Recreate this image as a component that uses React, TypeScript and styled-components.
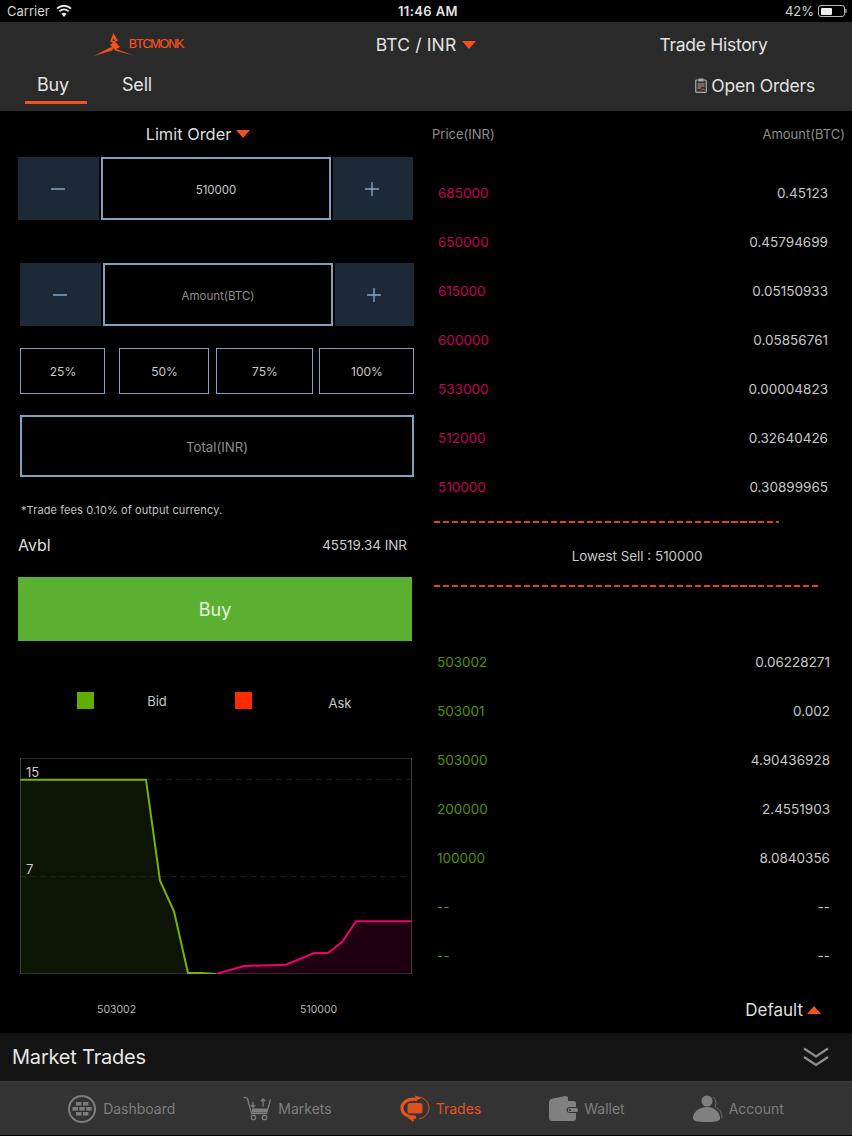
import { FC } from "react";
import styled, { createGlobalStyle } from "styled-components";
import { Minus, Plus } from "lucide-react";

const ORANGE = "#f4511e";
const BORDER = "#7fa2bf";

const GlobalStyle = createGlobalStyle`
  html, body {
    margin: 0;
    padding: 0;
    background: #000;
  }
  * {
    box-sizing: border-box;
  }
  body {
    font-family: Inter, "Noto Sans", "Liberation Sans", sans-serif;
    color: #e0e0e0;
  }
`;

const Page = styled.div`
  width: 852px;
  height: 1136px;
  display: flex;
  flex-direction: column;
  overflow: hidden;
  background: #000;
`;

/* status bar */
const StatusBar = styled.div`
  height: 22px;
  display: grid;
  grid-template-columns: 1fr auto 1fr;
  align-items: center;
  padding: 0 7px;
  font-size: 13px;
  color: #d4d4d4;
`;

const StatusSide = styled.div<{ $right?: boolean }>`
  display: flex;
  align-items: center;
  gap: ${({ $right }) => ($right ? "4px" : "6px")};
  justify-content: ${({ $right }) => ($right ? "flex-end" : "flex-start")};
`;

const Clock = styled.div`
  font-weight: 600;
  color: #e4e4e4;
  letter-spacing: 0.4px;
  padding-left: 4px;
`;

const Battery = styled.div`
  width: 27px;
  height: 12px;
  border: 1px solid #b8b8b8;
  border-radius: 3px;
  padding: 1.5px;
  position: relative;
  &::after {
    content: "";
    position: absolute;
    right: -3px;
    top: 3px;
    width: 2px;
    height: 4px;
    background: #777;
    border-radius: 0 1px 1px 0;
  }
`;

const BatteryFill = styled.div`
  width: 50%;
  height: 100%;
  background: #eee;
  border-radius: 1px;
`;

/* header */
const Header = styled.header`
  height: 89px;
  background: #2a2a2a;
  display: flex;
  flex-direction: column;
`;

const HeaderTop = styled.div`
  height: 45px;
  display: grid;
  grid-template-columns: 277px 298px 277px;
  align-items: center;
  justify-items: center;
`;

const HeaderTitle = styled.div<{ $wide?: boolean }>`
  display: flex;
  align-items: center;
  gap: 6px;
  font-size: 17.5px;
  color: #e2e2e2;
  letter-spacing: ${({ $wide }) => ($wide ? "0.15px" : "-0.3px")};
`;

const Logo = styled.div`
  display: flex;
  align-items: center;
`;

const LogoText = styled.span`
  font-family: "Liberation Sans", sans-serif;
  font-size: 12.5px;
  color: ${ORANGE};
  letter-spacing: -1.15px;
  -webkit-text-stroke: 0.2px ${ORANGE};
  margin-left: -5px;
  margin-top: -2px;
`;

const Triangle = styled.span<{ $up?: boolean }>`
  display: inline-block;
  width: 0;
  height: 0;
  border-left: 7px solid transparent;
  border-right: 7px solid transparent;
  ${({ $up }) =>
    $up
      ? `border-bottom: 8px solid ${ORANGE};`
      : `border-top: 8px solid ${ORANGE};`}
`;

const HeaderBottom = styled.div`
  height: 44px;
  display: flex;
  align-items: flex-start;
  padding: 0 37px 0 25px;
`;

const SideTab = styled.div<{ $active?: boolean }>`
  width: 62px;
  height: 37px;
  text-align: center;
  font-size: 18px;
  line-height: 36px;
  letter-spacing: -0.2px;
  color: #e2e2e2;
  padding-right: ${({ $active }) => ($active ? "6px" : "0")};
  border-bottom: 3px solid ${({ $active }) => ($active ? ORANGE : "transparent")};
  & + & {
    margin-left: 19px;
  }
`;

const OpenOrders = styled.div`
  margin-left: auto;
  height: 36px;
  display: flex;
  align-items: center;
  gap: 4px;
  font-size: 17.5px;
  letter-spacing: -0.2px;
  color: #e2e2e2;
`;

/* main */
const Main = styled.main`
  height: 922px;
  display: grid;
  grid-template-columns: 426px 426px;
`;

const LeftColumn = styled.section`
  display: flex;
  flex-direction: column;
`;

const OrderType = styled.div`
  height: 46px;
  padding-right: 30px;
  display: flex;
  align-items: center;
  justify-content: center;
  gap: 5px;
  font-size: 16.4px;
  color: #dedede;
`;

const Stepper = styled.div<{ $left: number; $top: number; $width: number }>`
  margin-left: ${({ $left }) => $left}px;
  margin-top: ${({ $top }) => $top}px;
  width: ${({ $width }) => $width}px;
  height: 63px;
  display: grid;
  grid-template-columns: 81px 230px 1fr;
  column-gap: 2px;
`;

const StepButton = styled.div`
  background: #1e2937;
  color: #7ea8cc;
  padding-right: 2px;
  display: flex;
  align-items: center;
  justify-content: center;
`;

const Field = styled.div<{ $dim?: boolean }>`
  border: 2px solid ${BORDER};
  padding-top: 2px;
  display: flex;
  align-items: center;
  justify-content: center;
  font-size: 11.5px;
  color: ${({ $dim }) => ($dim ? "#8f8f8f" : "#c8c8c8")};
`;

const PercentRow = styled.div`
  margin: 22px 0 0 20px;
  height: 46px;
  display: flex;
`;

const PercentButton = styled.div<{ $width: number; $gap: number }>`
  width: ${({ $width }) => $width}px;
  margin-left: ${({ $gap }) => $gap}px;
  border: 1.5px solid ${BORDER};
  padding-left: 1px;
  display: flex;
  align-items: center;
  justify-content: center;
  font-size: 12px;
  color: #c8c8c8;
`;

const TotalField = styled(Field)`
  margin: 21px 0 0 20px;
  width: 394px;
  height: 62px;
  font-size: 13.2px;
`;

const FeeNote = styled.div`
  margin: 25px 0 0 21px;
  height: 16px;
  line-height: 16px;
  font-size: 11px;
  letter-spacing: 0.1px;
  color: #c4c4c4;
`;

const AvblRow = styled.div`
  margin: 15px 0 0 18px;
  width: 389px;
  height: 24px;
  display: flex;
  align-items: center;
  justify-content: space-between;
`;

const AvblLabel = styled.span`
  font-size: 16px;
  color: #dedede;
`;

const AvblValue = styled.span`
  font-size: 13.4px;
  color: #cfcfcf;
`;

const BuyButton = styled.div`
  margin: 20px 0 0 18px;
  width: 394px;
  height: 64px;
  background: #5bb032;
  display: flex;
  align-items: center;
  justify-content: center;
  font-size: 18px;
  color: #e6f2df;
`;

const Legend = styled.div`
  margin: 51px 0 0 77px;
  height: 17px;
  display: flex;
  align-items: center;
`;

const Swatch = styled.span<{ $color: string }>`
  flex: none;
  width: 17px;
  height: 17px;
  background: ${({ $color }) => $color};
`;

const LegendLabel = styled.span<{ $width: number; $after?: number; $down?: boolean }>`
  flex: none;
  width: ${({ $width }) => $width}px;
  margin-right: ${({ $after }) => $after ?? 0}px;
  margin-top: ${({ $down }) => ($down ? "4px" : "0")};
  text-align: center;
  font-size: 13px;
  color: #c8c8c8;
`;

const ChartBox = styled.div`
  position: relative;
  margin: 49px 0 0 20px;
  width: 392px;
  height: 216px;
`;

const ChartSvg = styled.svg`
  display: block;
`;

const AxisValue = styled.span<{ $top: number }>`
  position: absolute;
  left: 6px;
  top: ${({ $top }) => $top}px;
  font-size: 13px;
  line-height: 16px;
  color: #c8c8c8;
`;

const XAxis = styled.div`
  margin-top: 28px;
  height: 16px;
  padding-left: 97px;
  display: flex;
  font-size: 10.5px;
  line-height: 16px;
  color: #b8b8b8;
`;

const XTick = styled.span`
  flex: none;
  width: 203px;
`;

/* order book */
const RightColumn = styled.section`
  display: flex;
  flex-direction: column;
`;

const BookHead = styled.div`
  height: 46px;
  padding: 0 7px 0 6px;
  display: flex;
  align-items: center;
  justify-content: space-between;
  font-size: 13px;
  color: #8c8c8c;
`;

const BookList = styled.div<{ $top: number }>`
  margin-top: ${({ $top }) => $top}px;
`;

const BookRow = styled.div<{ $buy?: boolean }>`
  height: 49px;
  display: flex;
  align-items: center;
  justify-content: space-between;
  padding: ${({ $buy }) => ($buy ? "0 22px 0 11px" : "0 24px 0 12px")};
  font-size: 13.5px;
  color: #c8c8c8;
`;

const Price = styled.span<{ $buy?: boolean }>`
  color: ${({ $buy }) => ($buy ? "#558f00" : "#c4005a")};
`;

const DashLine = styled.div<{ $width: number; $top: number }>`
  margin: ${({ $top }) => $top}px 0 0 8px;
  width: ${({ $width }) => $width}px;
  height: 2px;
  background: repeating-linear-gradient(
    to right,
    #e0451a 0,
    #e0451a 6.5px,
    transparent 6.5px,
    transparent 9px
  );
`;

const LowestSell = styled.div`
  margin-top: 24px;
  height: 18px;
  line-height: 18px;
  text-align: center;
  font-size: 13.4px;
  padding-right: 4px;
  color: #c8c8c8;
`;

const SortRow = styled.div`
  margin-top: 20px;
  height: 20px;
  padding-right: 31px;
  display: flex;
  align-items: center;
  justify-content: flex-end;
  gap: 4px;
  font-size: 17px;
  color: #dedede;
`;

/* market trades bar */
const TradesBar = styled.div`
  height: 48px;
  background: #141414;
  display: flex;
  align-items: center;
  justify-content: space-between;
  padding: 0 23px 0 12px;
  font-size: 20px;
  letter-spacing: -0.2px;
  color: #e6e6e6;
`;

const ChevronSlot = styled.span`
  display: flex;
  margin-top: -2px;
`;

/* tab bar */
const TabBar = styled.nav`
  height: 54px;
  background: #333;
  border-top: 1px solid #3c3c3c;
  display: flex;
  align-items: center;
  justify-content: center;
  gap: 68px;
  padding-right: 1px;
`;

const TabItem = styled.div<{ $active?: boolean }>`
  display: flex;
  align-items: center;
  gap: 6px;
  font-size: 14px;
  color: ${({ $active }) => ($active ? "#e8521c" : "#7d7d7d")};
`;

const Logomark = () => (
  <svg width="40" height="23" viewBox="0 0 40 23">
    <path
      fill={ORANGE}
      d="M19.5 0 L24 8 L21 8.5 L26 14 L22 16 L40 22.5 L21 17.5 L19.5 15 L18 17.5 L0 23 L14 15.5 L18 14 L16 12 L19 9.5 L16 8.5 Z M19.5 5 L18.5 8 L21 8 Z"
    />
  </svg>
);

const WifiIcon = () => (
  <svg width="16" height="12" viewBox="0 0 16 12">
    <path fill="#e8e8e8" d="M8 12 L5.4 8.8 A4 4 0 0 1 10.6 8.8 Z" />
    <path fill="none" stroke="#e8e8e8" strokeWidth="1.8" d="M3.4 6.3 A6.5 6.5 0 0 1 12.6 6.3" />
    <path fill="none" stroke="#e8e8e8" strokeWidth="1.8" d="M1 3.6 A10 10 0 0 1 15 3.6" />
  </svg>
);

const ClipboardIcon = () => (
  <svg width="12" height="15" viewBox="0 0 12 15">
    <rect x="0.7" y="2" width="10.6" height="12.4" rx="1" fill="#333" stroke="#a8a8a8" strokeWidth="1.2" />
    <rect x="3.5" y="0.5" width="5" height="3" fill="#a8a8a8" />
    <path stroke="#a8a8a8" strokeWidth="1" d="M2.5 6 H9.5 M2.5 8 H9.5 M2.5 10 H6" />
    <path stroke={ORANGE} strokeWidth="1" fill="none" d="M6.5 12 L8 10.8 L9.5 11.8" />
  </svg>
);

const DoubleChevron = () => (
  <svg width="26" height="19" viewBox="0 0 26 19" fill="none" stroke="#8e8e8e" strokeWidth="2.2">
    <path d="M1 1.5 L13 9.5 L25 1.5" />
    <path d="M1 10 L13 18 L25 10" />
  </svg>
);

const DashboardIcon = () => (
  <svg width="30" height="30" viewBox="0 0 30 30">
    <circle cx="15" cy="15" r="13" fill="none" stroke="#7d7d7d" strokeWidth="2" />
    <g fill="#7d7d7d">
      <rect x="9" y="8" width="5.5" height="3.6" />
      <rect x="16" y="8" width="5.5" height="3.6" />
      <rect x="5.5" y="13" width="5.5" height="3.6" />
      <rect x="12.3" y="13" width="5.5" height="3.6" />
      <rect x="19.2" y="13" width="5.5" height="3.6" />
      <rect x="9" y="18" width="5.5" height="3.6" />
      <rect x="16" y="18" width="5.5" height="3.6" />
    </g>
  </svg>
);

const CartIcon = () => (
  <svg width="29" height="25" viewBox="0 0 29 25" fill="none" stroke="#7d7d7d" strokeWidth="1.3">
    <path d="M0.5 1 L4.5 2.5 L8.5 17.5 H23.5 L27.5 3.5" />
    <circle cx="10.5" cy="21.5" r="2.2" />
    <circle cx="21.5" cy="21.5" r="2.2" />
    <path d="M10 6 V11 M7.8 9 L10 11.3 L12.2 9" />
    <path d="M20 10.5 V3 M17.8 5.2 L20 3 L22.2 5.2" />
    <rect x="9" y="12.5" width="15" height="4" fill="#7d7d7d" stroke="none" />
  </svg>
);

const TradesIcon = () => (
  <svg width="30" height="28" viewBox="0 0 30 28" fill="none" stroke="#e8521c">
    <path strokeWidth="3.2" d="M17 4.5 C8 3 2 7.5 2 13 C2 18.5 8 23 16 22" />
    <path strokeWidth="1" d="M18 2 C25 2.5 29 7.5 29 13 C29 18 25 23 19 24" />
    <path fill="#e8521c" stroke="none" d="M8 23 L14 20.5 L13.5 27 Z M15 0.5 L21 3 L16 6 Z" />
    <rect x="7.5" y="8" width="15" height="10.5" rx="2.5" fill="#d9531f" stroke="none" />
  </svg>
);

const WalletIcon = () => (
  <svg width="29" height="25" viewBox="0 0 29 25">
    <path
      fill="#808080"
      d="M0 7 C0 4.5 1 3.5 3 2.8 L16 0 L19 1 V5 H25 C26.5 5 27 6 27 7 V11 H21 C19 11 17.5 12.2 17.5 14 C17.5 15.8 19 17 21 17 H27 V22 C27 24 26 25 24 25 H3 C1 25 0 24 0 22 Z"
    />
    <rect x="19" y="12" width="10" height="4" rx="1.5" fill="#808080" />
    <circle cx="21" cy="14" r="1" fill="#333" />
  </svg>
);

const AccountIcon = () => (
  <svg width="30" height="27" viewBox="0 0 30 27">
    <circle cx="14" cy="6" r="5.5" fill="#808080" />
    <path fill="#808080" d="M0 23 C0 17 6 12 14 12 C22 12 27 18 27 23 C27 26 24 27 14 27 C4 27 0 26 0 23 Z" />
    <path fill="none" stroke="#6a6a6a" strokeWidth="1" d="M20 2 C24 5 23 10 22 12 C27 14 29 18 29 23" />
  </svg>
);

const SELLS = [
  ["685000", "0.45123"],
  ["650000", "0.45794699"],
  ["615000", "0.05150933"],
  ["600000", "0.05856761"],
  ["533000", "0.00004823"],
  ["512000", "0.32640426"],
  ["510000", "0.30899965"],
];

const BUYS = [
  ["503002", "0.06228271"],
  ["503001", "0.002"],
  ["503000", "4.90436928"],
  ["200000", "2.4551903"],
  ["100000", "8.0840356"],
  ["--", "--"],
  ["--", "--"],
];

const PERCENTS = [
  { label: "25%", width: 85, gap: 0 },
  { label: "50%", width: 90, gap: 14 },
  { label: "75%", width: 97, gap: 7 },
  { label: "100%", width: 95, gap: 6 },
];

const Step: FC<{ left: number; top: number; width: number; dim?: boolean; text: string }> = ({
  left,
  top,
  width,
  dim,
  text,
}) => (
  <Stepper $left={left} $top={top} $width={width}>
    <StepButton>
      <Minus size={22} strokeWidth={1.5} />
    </StepButton>
    <Field $dim={dim}>{text}</Field>
    <StepButton>
      <Plus size={22} strokeWidth={1.5} />
    </StepButton>
  </Stepper>
);

// the viewBox is in 1/3 px so the points could be read straight off a zoomed crop
const DepthChart = () => (
  <ChartBox>
    <ChartSvg width="392" height="216" viewBox="61 55 1174 648" fill="none">
      <path fill="#0c1503" d="M61 120 H438 L480 423 L522 515 L564 700 L648 703 H61 Z" />
      <path fill="#1e0010" d="M648 703 L732 679 L858 675 L942 640 L984 640 L1026 607 L1068 545 H1235 V703 Z" />
      <path stroke="#2e2e2e" strokeWidth="2" strokeDasharray="18 12" d="M438 120 H1235 M61 411 H1235" />
      <rect x="61" y="55" width="1174" height="648" stroke="#444" strokeWidth="3.5" />
      <path stroke="#78b400" strokeWidth="6" d="M61 120 H438 L480 423 L522 515 L564 700 L606 700 L648 703" />
      <path stroke="#f0006e" strokeWidth="6" d="M648 703 L732 679 L858 675 L942 640 L984 640 L1026 607 L1068 545 H1235" />
    </ChartSvg>
    <AxisValue $top={6}>15</AxisValue>
    <AxisValue $top={103}>7</AxisValue>
  </ChartBox>
);

export default function App() {
  return (
    <Page>
      <GlobalStyle />
      <StatusBar>
        <StatusSide>
          Carrier
          <WifiIcon />
        </StatusSide>
        <Clock>11:46 AM</Clock>
        <StatusSide $right>
          42%
          <Battery>
            <BatteryFill />
          </Battery>
        </StatusSide>
      </StatusBar>

      <Header>
        <HeaderTop>
          <Logo>
            <Logomark />
            <LogoText>BTCMONK</LogoText>
          </Logo>
          <HeaderTitle $wide>
            BTC / INR
            <Triangle />
          </HeaderTitle>
          <HeaderTitle>Trade History</HeaderTitle>
        </HeaderTop>
        <HeaderBottom>
          <SideTab $active>Buy</SideTab>
          <SideTab>Sell</SideTab>
          <OpenOrders>
            <ClipboardIcon />
            Open Orders
          </OpenOrders>
        </HeaderBottom>
      </Header>

      <Main>
        <LeftColumn>
          <OrderType>
            Limit Order
            <Triangle />
          </OrderType>
          <Step left={18} top={0} width={395} text="510000" />
          <Step left={20} top={43} width={394} text="Amount(BTC)" dim />
          <PercentRow>
            {PERCENTS.map((p) => (
              <PercentButton key={p.label} $width={p.width} $gap={p.gap}>
                {p.label}
              </PercentButton>
            ))}
          </PercentRow>
          <TotalField $dim>Total(INR)</TotalField>
          <FeeNote>*Trade fees 0.10% of output currency.</FeeNote>
          <AvblRow>
            <AvblLabel>Avbl</AvblLabel>
            <AvblValue>45519.34 INR</AvblValue>
          </AvblRow>
          <BuyButton>Buy</BuyButton>
          <Legend>
            <Swatch $color="#5fae00" />
            <LegendLabel $width={126} $after={15}>
              Bid
            </LegendLabel>
            <Swatch $color="#ff2a00" />
            <LegendLabel $width={176} $down>
              Ask
            </LegendLabel>
          </Legend>
          <DepthChart />
          <XAxis>
            <XTick>503002</XTick>
            <XTick>510000</XTick>
          </XAxis>
        </LeftColumn>

        <RightColumn>
          <BookHead>
            <span>Price(INR)</span>
            <span>Amount(BTC)</span>
          </BookHead>
          <BookList $top={11}>
            {SELLS.map(([price, amount]) => (
              <BookRow key={price}>
                <Price>{price}</Price>
                <span>{amount}</span>
              </BookRow>
            ))}
          </BookList>
          <DashLine $width={345} $top={10} />
          <LowestSell>Lowest Sell : 510000</LowestSell>
          <DashLine $width={387} $top={20} />
          <BookList $top={50}>
            {BUYS.map(([price, amount], i) => (
              <BookRow key={i} $buy>
                <Price $buy>{price}</Price>
                <span>{amount}</span>
              </BookRow>
            ))}
          </BookList>
          <SortRow>
            Default
            <Triangle $up />
          </SortRow>
        </RightColumn>
      </Main>

      <TradesBar>
        Market Trades
        <ChevronSlot>
          <DoubleChevron />
        </ChevronSlot>
      </TradesBar>

      <TabBar>
        <TabItem>
          <DashboardIcon />
          Dashboard
        </TabItem>
        <TabItem>
          <CartIcon />
          Markets
        </TabItem>
        <TabItem $active>
          <TradesIcon />
          Trades
        </TabItem>
        <TabItem>
          <WalletIcon />
          Wallet
        </TabItem>
        <TabItem>
          <AccountIcon />
          Account
        </TabItem>
      </TabBar>
    </Page>
  );
}
